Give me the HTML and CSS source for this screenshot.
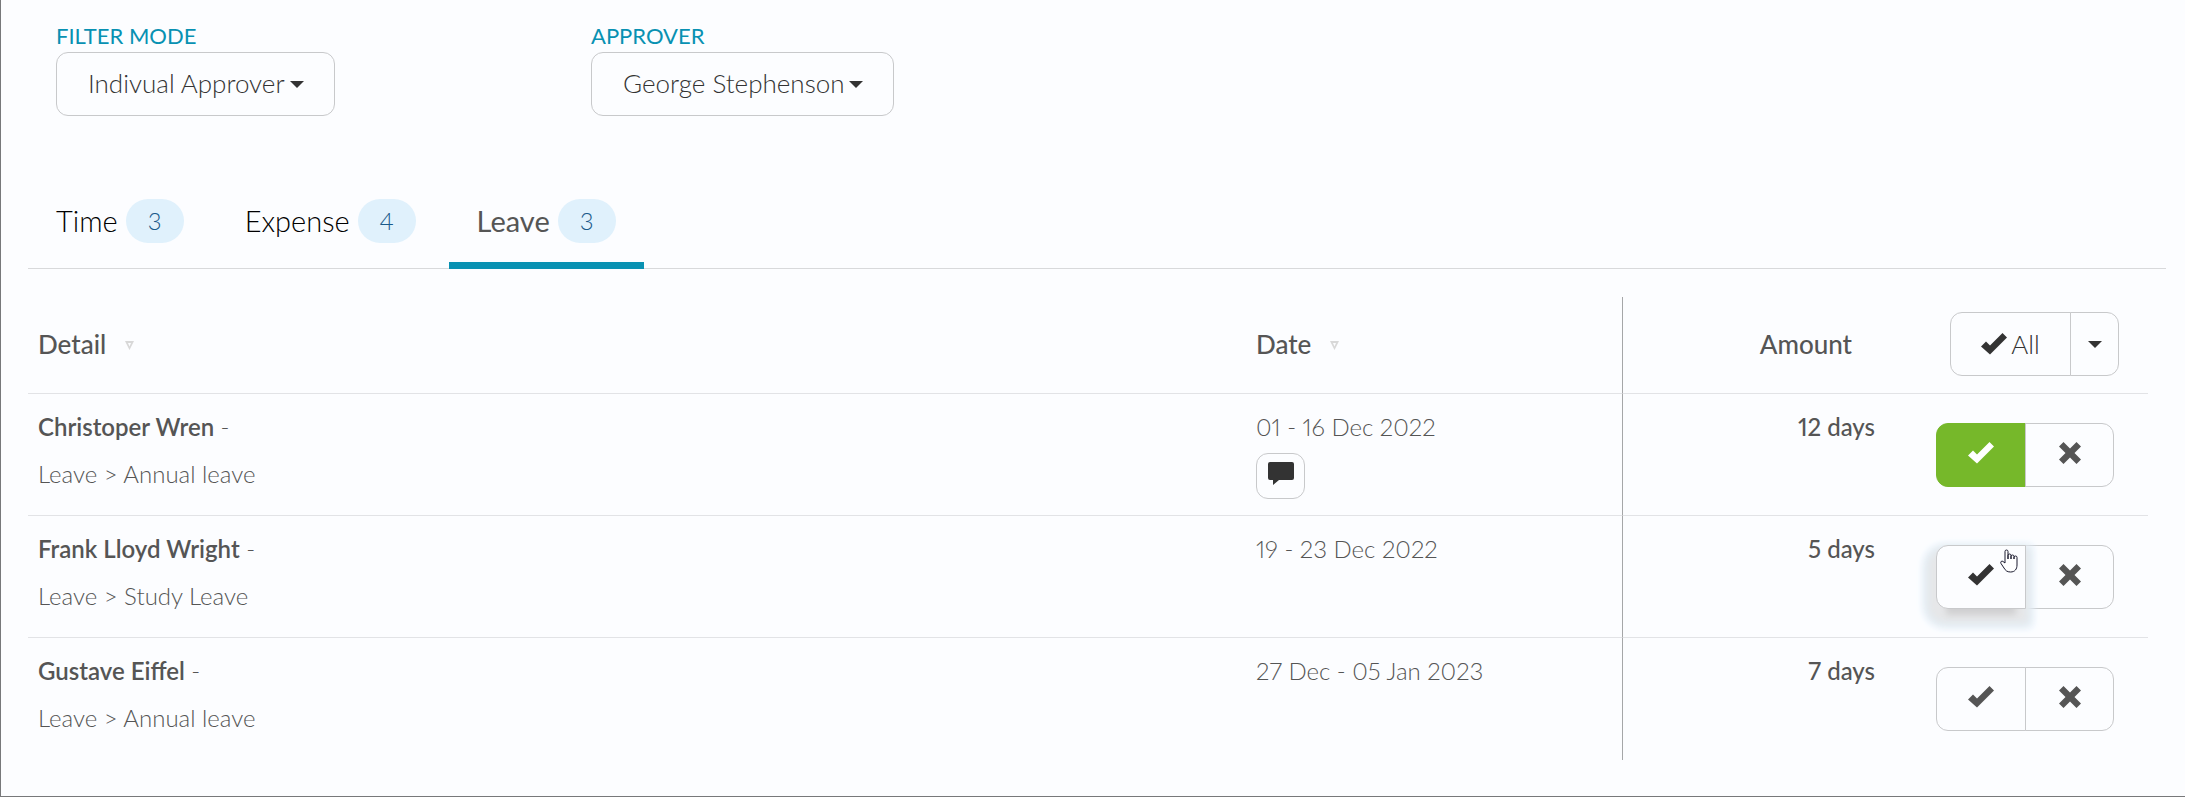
FILE: index.html
```
<!DOCTYPE html>
<html lang="en">
<head>
    <meta charset="UTF-8">
    <meta name="viewport" content="width=device-width, initial-scale=1.0">
    <title>Approvals</title>
    <link rel="stylesheet" href="styles.css">
</head>
<body>
    <svg class="sprite" aria-hidden="true">
        <symbol id="icon-check" viewBox="0 0 26 22"><path d="M0 13.500 5 8.500 9 12.500 21.500 0 26 4.500 9 21.500z"/></symbol>
        <symbol id="icon-cross" viewBox="0 0 22 22"><path d="M4.500 0 11 6.500 17.500 0 22 4.500 15.500 11 22 17.500 17.500 22 11 15.500 4.500 22 0 17.500 6.500 11 0 4.500z"/></symbol>
        <symbol id="icon-comment" viewBox="0 0 26 23"><path d="M2 0h22a2 2 0 0 1 2 2v14a2 2 0 0 1-2 2H11l-6 5v-5H2a2 2 0 0 1-2-2V2a2 2 0 0 1 2-2z"/></symbol>
        <symbol id="icon-caret" viewBox="0 0 14 7"><path d="M0 0h14L7 7z"/></symbol>
        <symbol id="icon-sort" viewBox="0 0 9 9"><path fill-rule="evenodd" d="M0 0h9L4.500 9zM3 2l1.500 3.500L6 2z"/></symbol>
    </svg>

    <main class="page">
        <form class="filters">
            <div class="filter">
                <label for="filterMode">FILTER MODE</label>
                <select id="filterMode">
                    <option>Indivual Approver</option>
                </select>
            </div>
            <div class="filter">
                <label for="approver">APPROVER</label>
                <select id="approver">
                    <option>George Stephenson</option>
                </select>
            </div>
        </form>

        <nav class="tabs">
            <a href="#time" class="tab">Time <span class="badge">3</span></a>
            <a href="#expense" class="tab">Expense <span class="badge">4</span></a>
            <a href="#leave" class="tab active">Leave <span class="badge">3</span></a>
        </nav>

        <table class="approvals">
            <thead>
                <tr>
                    <th class="col-detail">Detail <svg class="sort"><use href="#icon-sort"/></svg></th>
                    <th class="col-date">Date <svg class="sort"><use href="#icon-sort"/></svg></th>
                    <th class="col-amount">Amount</th>
                    <th class="col-actions">
                        <div class="btn-group">
                            <button type="button" class="btn btn-all"><svg class="check"><use href="#icon-check"/></svg> All</button>
                            <button type="button" class="btn btn-more" aria-label="More"><svg class="caret"><use href="#icon-caret"/></svg></button>
                        </div>
                    </th>
                </tr>
            </thead>
            <tbody>
                <tr>
                    <td><p class="name"><strong>Christoper Wren</strong> -</p><p>Leave &gt; Annual leave</p></td>
                    <td>
                        <p class="date">01 - 16 Dec 2022</p>
                        <button type="button" class="btn btn-comment" aria-label="Comment"><svg class="comment"><use href="#icon-comment"/></svg></button>
                    </td>
                    <td class="col-amount">12 days</td>
                    <td class="col-actions">
                        <div class="btn-group">
                            <button type="button" class="btn btn-row approved" aria-label="Approve"><svg class="check"><use href="#icon-check"/></svg></button>
                            <button type="button" class="btn btn-row" aria-label="Reject"><svg class="cross"><use href="#icon-cross"/></svg></button>
                        </div>
                    </td>
                </tr>
                <tr>
                    <td><p class="name"><strong>Frank Lloyd Wright</strong> -</p><p>Leave &gt; Study Leave</p></td>
                    <td><p class="date">19 - 23 Dec 2022</p></td>
                    <td class="col-amount">5 days</td>
                    <td class="col-actions">
                        <div class="btn-group">
                            <button type="button" class="btn btn-row raised" aria-label="Approve">
                                <svg class="check"><use href="#icon-check"/></svg>
                                <svg class="pointer" viewBox="0 0 18 24"><path d="M5 14V2.500a1.500 1.500 0 0 1 3 0V10 6.500a1.500 1.500 0 0 1 3 0V10 7.500a1.500 1.500 0 0 1 3 0V10 8.500a1.500 1.500 0 0 1 3 0V16c0 4-2 7-6.500 7-3.500 0-5-1.500-6.500-4L1 14.500c-1-2 1-3 2-2L5 14"/></svg>
                            </button>
                            <button type="button" class="btn btn-row" aria-label="Reject"><svg class="cross"><use href="#icon-cross"/></svg></button>
                        </div>
                    </td>
                </tr>
                <tr>
                    <td><p class="name"><strong>Gustave Eiffel</strong> -</p><p>Leave &gt; Annual leave</p></td>
                    <td><p class="date">27 Dec - 05 Jan 2023</p></td>
                    <td class="col-amount">7 days</td>
                    <td class="col-actions">
                        <div class="btn-group">
                            <button type="button" class="btn btn-row" aria-label="Approve"><svg class="check"><use href="#icon-check"/></svg></button>
                            <button type="button" class="btn btn-row" aria-label="Reject"><svg class="cross"><use href="#icon-cross"/></svg></button>
                        </div>
                    </td>
                </tr>
            </tbody>
        </table>
    </main>
</body>
</html>
```
FILE: styles.css
```
* {
    box-sizing: border-box;
}

body {
    margin: 0;
    background: #fcfdff;
    color: #555;
    font-family: 'Lato', sans-serif;
    font-size: 24px;
    font-variant-numeric: proportional-nums;
    font-weight: 300;
    line-height: 34px;
}

p {
    margin: 0;
}

svg {
    fill: currentColor;
}

.sprite {
    display: none;
}

.page {
    min-height: 100vh;
    padding: 20px 19px 36px 27px;
    border-left: 1px solid #77787a;
    border-bottom: 1px solid #77787a;
}

/* filters */
.filters {
    display: grid;
    grid-template-columns: 535px auto;
    justify-content: start;
    padding-left: 28px;
}

.filter {
    display: flex;
    flex-direction: column;
    align-items: flex-start;
}

.filter label {
    color: #0891b2;
    font-size: 22px;
    font-weight: 400;
    line-height: 32px;
}

.filter select {
    height: 64px;
    padding: 0 48px 2px 31px;
    appearance: none;
    border: 1px solid #c8c9cb;
    border-radius: 12px;
    background: url("data:image/svg+xml,%3Csvg xmlns='http://www.w3.org/2000/svg' viewBox='0 0 14 7'%3E%3Cpath fill='%23333' d='M0 0h14L7 7z'/%3E%3C/svg%3E") no-repeat right 30px center / 14px 7px;
    color: #333;
    font: inherit;
    font-size: 26px;
}

/* tabs */
.tabs {
    display: flex;
    gap: 5px;
    margin-top: 66px;
    border-bottom: 1px solid #d8d9db;
}

.tab {
    display: flex;
    align-items: center;
    gap: 8px;
    height: 87px;
    margin-bottom: -1px;
    padding: 0 28px 2px;
    border-bottom: 7px solid transparent;
    color: #000;
    font-size: 29px;
    text-decoration: none;
}

.tab.active {
    border-bottom-color: #0891b2;
    color: #555;
    font-weight: 400;
}

.badge {
    min-width: 58px;
    border-radius: 22px;
    background: #e0f1fc;
    color: #1a5a8a;
    font-size: 24px;
    font-weight: 300;
    line-height: 44px;
    text-align: center;
}

/* table */
.approvals {
    width: calc(100% - 18px);
    margin-top: 28px;
    border-spacing: 0;
    table-layout: fixed;
}

th,
td {
    padding: 15px 10px;
    border-bottom: 1px solid #e2e3e6;
    text-align: left;
    vertical-align: top;
}

td {
    height: 122px;
    padding-top: 16px;
    padding-bottom: 0;
}

th {
    padding-bottom: 17px;
    font-size: 26px;
    font-weight: 500;
    vertical-align: middle;
}

tbody tr:last-child td {
    border-bottom: 0;
}

.col-date {
    width: 376px;
}

.col-amount {
    width: 263px;
    border-left: 1px solid #a5a6a8;
    font-weight: 500;
    text-align: right;
}

th.col-amount {
    padding-right: 33px;
}

.col-actions {
    width: 263px;
    padding-right: 34px;
}

th.col-actions {
    padding-right: 29px;
}

td.col-actions {
    padding-top: 29px;
}

.sort {
    width: 9px;
    height: 9px;
    margin-left: 12px;
    color: #d8d8d8;
    vertical-align: 4px;
}

strong {
    font-weight: 600;
}

.name {
    margin-bottom: 13px;
}

.date {
    margin-bottom: 9px;
}

/* buttons */
.btn {
    display: flex;
    align-items: center;
    justify-content: center;
    gap: 4px;
    height: 64px;
    padding: 0;
    border: 1px solid #c8c9cb;
    border-radius: 12px;
    background: #fcfdff;
    color: #333;
    font: inherit;
    font-size: 26px;
    font-weight: 300;
}

.btn-group {
    display: flex;
    justify-content: flex-end;
}

.btn-group .btn:first-child {
    border-top-right-radius: 0;
    border-bottom-right-radius: 0;
}

.btn-group .btn:last-child {
    margin-left: -1px;
    border-top-left-radius: 0;
    border-bottom-left-radius: 0;
}

.btn-all {
    width: 121px;
}

.btn-more {
    width: 49px;
}

.btn-row {
    width: 90px;
    padding-bottom: 5px;
    color: #555;
}

.btn-row:last-child {
    width: 89px;
}

.btn-comment {
    width: 49px;
    height: 46px;
    padding-bottom: 5px;
}

.btn.approved {
    border-color: #76b82a;
    background: #76b82a;
    color: #fff;
}

.btn.raised {
    position: relative;
    z-index: 1;
    color: #333;
    box-shadow: 0 16px 6px -10px #d0d0d1, -3px 9px 8px 7px #e6e7e9, -3px 9px 8px 9px #e0f1fc;
}

.pointer {
    position: absolute;
    top: 3px;
    right: 7px;
    width: 18px;
    height: 24px;
    fill: #fff;
    stroke: #1a1a2e;
}

.check {
    width: 26px;
    height: 22px;
}

.cross {
    width: 22px;
    height: 22px;
}

.comment {
    width: 26px;
    height: 23px;
}

.caret {
    width: 14px;
    height: 7px;
}
```
